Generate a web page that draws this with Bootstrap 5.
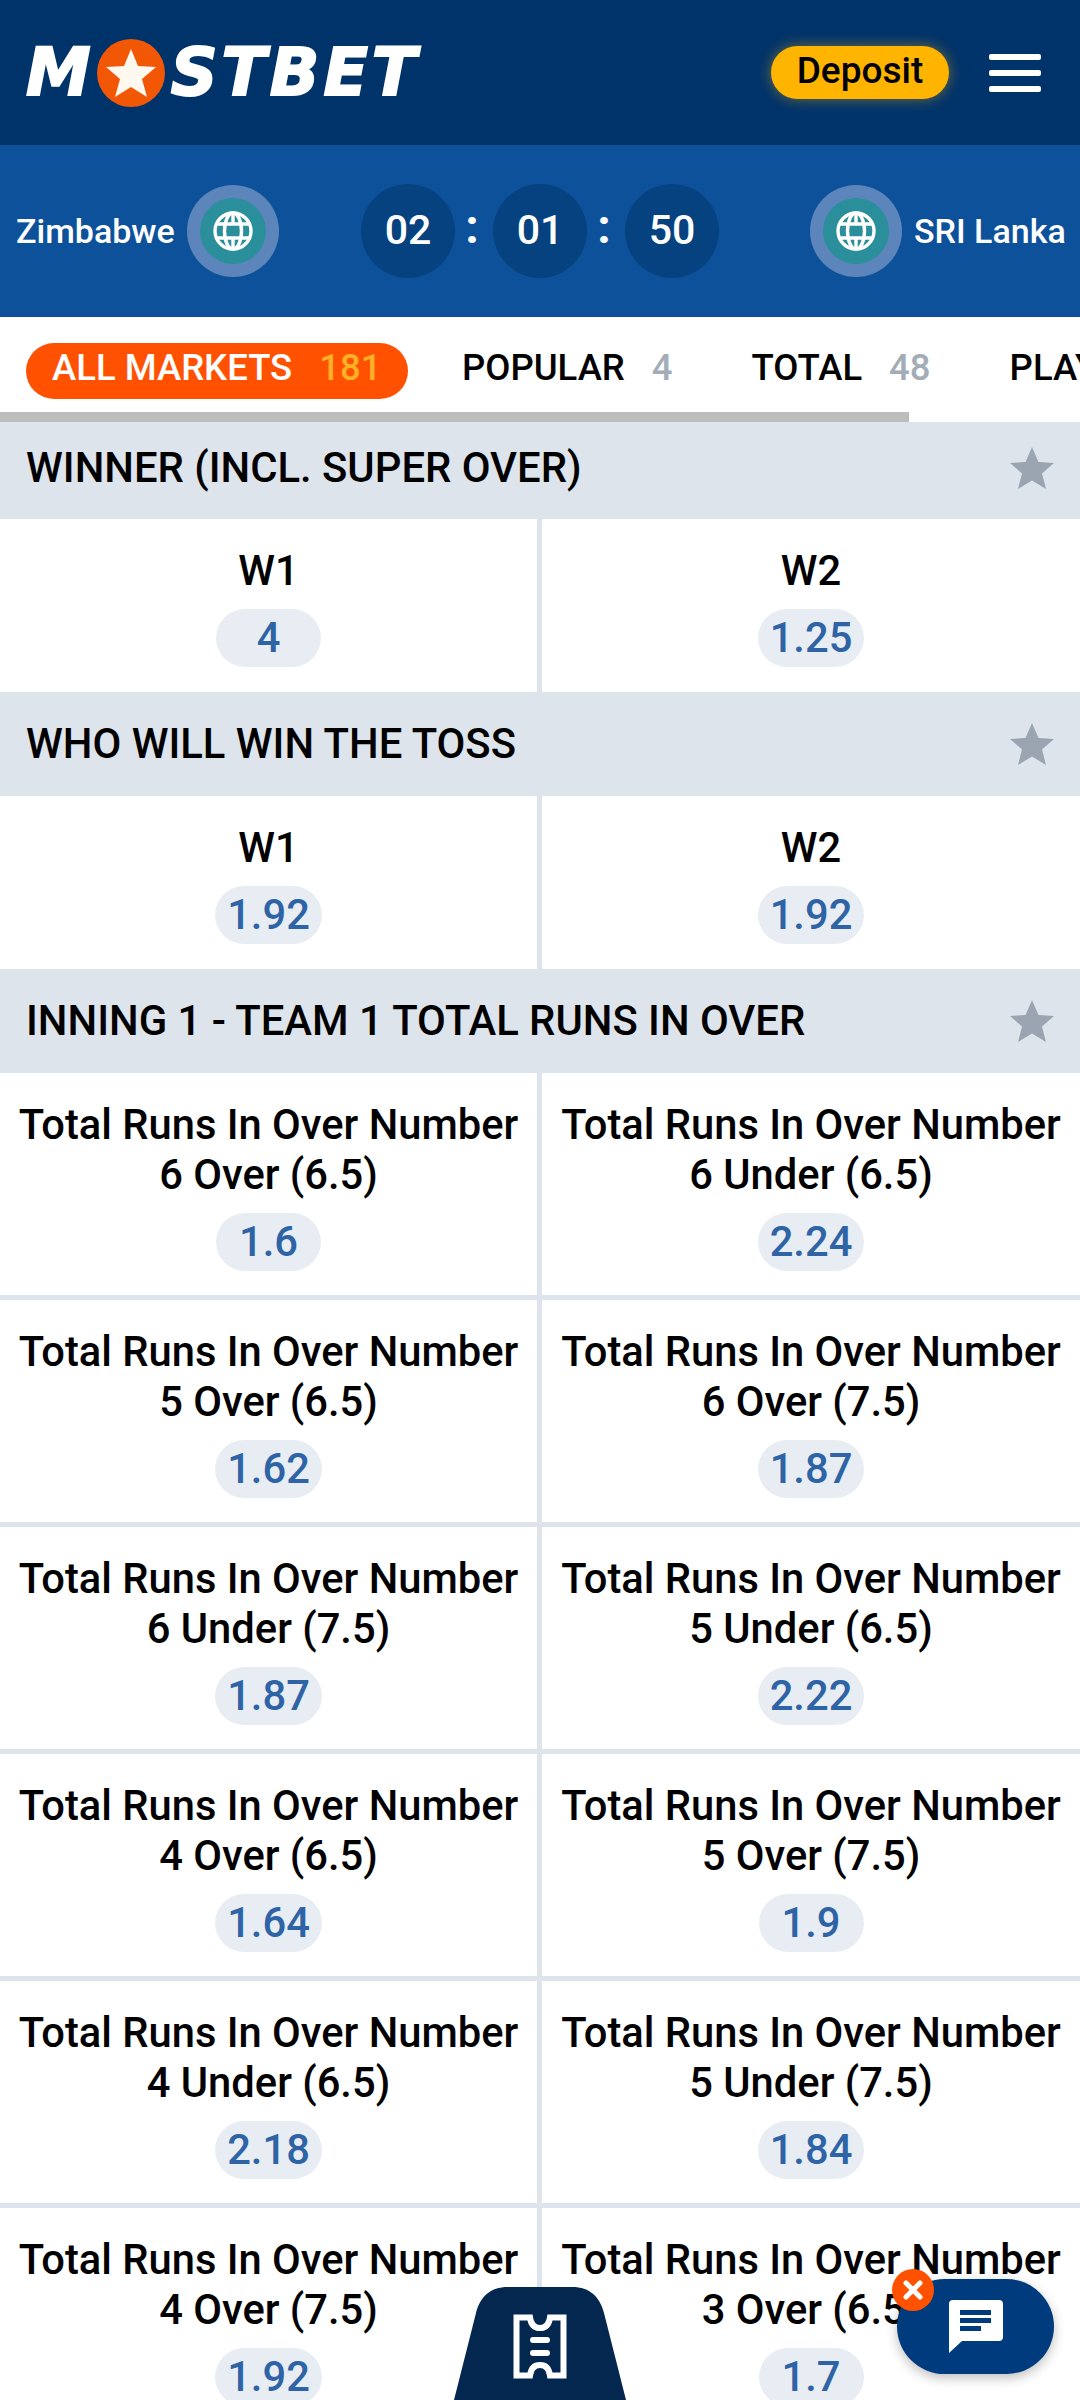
<!DOCTYPE html>
<html lang="en">
<head>
<meta charset="UTF-8">
<meta name="viewport" content="width=device-width, initial-scale=1.0">
<title>Mostbet</title>
<link href="https://cdn.jsdelivr.net/npm/bootstrap@5.3.3/dist/css/bootstrap.min.css" rel="stylesheet">
<style>
body { font-family: Roboto, "Liberation Sans", sans-serif; font-weight: 500; color: #000; width: 1080px; height: 2400px; overflow: hidden; position: relative; background: #fff; }
.top-bar { height: 145px; background: #00336a; padding: 0 39px 0 26px; }
.logo { font-family: "DejaVu Sans", sans-serif; font-weight: 700; font-style: italic; font-size: 65px; line-height: 1; color: #fff; -webkit-text-stroke: 2px #fff; }
.logo svg { margin: 0 6px; flex: none; }
.logo-rest { letter-spacing: 4px; }
.deposit-btn { width: 178px; height: 53px; line-height: 1; background: #ffb400; color: #000; font-size: 37px; font-weight: 500; border-radius: 27px; padding: 0 0 5px; box-shadow: 0 0 14px rgba(255, 180, 0, .45); border: 0; }
.burger { width: 52px; height: 38px; margin-left: 40px; }
.burger span { display: block; height: 6px; border-radius: 2px; background: #fff; }
.score-bar { height: 172px; background: #0e519b; color: #fff; padding: 0 13px 0 16px; font-size: 34px; }
.team { width: 264px; gap: 12px; }
.team-right { width: 257px; gap: 12px; }
.globe { width: 92px; height: 92px; border-radius: 50%; background: #5b85bb; flex: none; }
.globe span { width: 66px; height: 66px; border-radius: 50%; background: #2b8e9b; }
.clock { margin-left: 81px; margin-right: 91px; }
.clock-num { width: 94px; height: 94px; border-radius: 50%; background: #06427f; font-size: 41px; font-weight: 500; }
.clock-sep { width: 38px; font-size: 48px; font-weight: 700; line-height: 1; padding: 0 4px 8px 0; }
.tabs { height: 95px; padding: 26px 0 0 26px; font-size: 36.5px; overflow: hidden; white-space: nowrap; }
.tab { height: 56px; padding: 0 26px; border-radius: 28px; flex: none; line-height: 50px; }
.tab-on { background: #ff5100; color: #fff; width: 382px; margin-right: 54px; }
.tab-plain { padding: 0 0; margin-right: 79px; }
.tab-num { color: #a3adb8; margin-left: 27px; }
.tab-on .tab-num { color: #ffb125; }
.scroll-line { width: 909px; height: 10px; background: #bdbdbd; }
.mkt-head { background: #dde4eb; padding: 0 26px; font-size: 41.8px; height: 104px; }
.mkt-head-first { height: 97px; padding-bottom: 5px; }
.pick { text-align: center; font-size: 41.7px; line-height: 50px; padding: 27px 0 25px; }
.col-left { border-right: 3px solid #dde4eb; }
.col-right { border-left: 2px solid #dde4eb; }
.line-row { border-bottom: 5px solid #dde4eb; }
.line-row .pick { padding-bottom: 24px; }
.odd-pill { display: inline-block; min-width: 105px; height: 58px; line-height: 58px; margin-top: 13px; padding: 0 12px; border-radius: 29px; background: #e8edf3; color: #2e64a5; vertical-align: top; }
.slip-tab { position: absolute; left: 454px; top: 2287px; }
.chat-btn { position: absolute; left: 897px; top: 2279px; width: 157px; height: 95px; border-radius: 48px; background: #003c7d; box-shadow: 0 4px 12px rgba(0, 0, 0, .25); }
.chat-close { position: absolute; left: 892px; top: 2269px; width: 42px; height: 42px; border-radius: 50%; background: #ff5100; }
</style>
</head>
<body>
<header class="top-bar d-flex align-items-center justify-content-between">
    <div class="logo d-flex align-items-center">
        <span>M</span>
        <svg width="68" height="68" viewBox="0 0 68 68"><circle cx="34" cy="34" r="34" fill="#f25705"/><polygon points="34,10 41,27 59,28 45,40 50,58 34,48 18,58 23,40 9,28 27,27" fill="#fff8ee"/></svg>
        <span class="logo-rest">STBET</span>
    </div>
    <div class="d-flex align-items-center">
        <button class="deposit-btn" type="button">Deposit</button>
        <div class="burger d-flex flex-column justify-content-between"><span></span><span></span><span></span></div>
    </div>
</header>

<section class="score-bar d-flex align-items-center">
    <div class="team d-flex align-items-center">
        <span>Zimbabwe</span>
        <div class="globe d-flex align-items-center justify-content-center"><span class="d-flex align-items-center justify-content-center">
            <svg width="40" height="40" viewBox="0 0 40 40" fill="none" stroke="#fff" stroke-width="3.4"><circle cx="20" cy="20" r="18"/><ellipse cx="20" cy="20" rx="8.5" ry="18"/><path d="M20 2v11M20 27v11M4 13h32M4 27h32"/></svg>
        </span></div>
    </div>
    <div class="clock d-flex align-items-center">
        <div class="clock-num d-flex align-items-center justify-content-center">02</div>
        <div class="clock-sep text-center">:</div>
        <div class="clock-num d-flex align-items-center justify-content-center">01</div>
        <div class="clock-sep text-center">:</div>
        <div class="clock-num d-flex align-items-center justify-content-center">50</div>
    </div>
    <div class="team-right d-flex align-items-center">
        <div class="globe d-flex align-items-center justify-content-center"><span class="d-flex align-items-center justify-content-center">
            <svg width="40" height="40" viewBox="0 0 40 40" fill="none" stroke="#fff" stroke-width="3.4"><circle cx="20" cy="20" r="18"/><ellipse cx="20" cy="20" rx="8.5" ry="18"/><path d="M20 2v11M20 27v11M4 13h32M4 27h32"/></svg>
        </span></div>
        <span class="text-nowrap">SRI Lanka</span>
    </div>
</section>

<nav class="tabs d-flex">
    <div class="tab tab-on">ALL MARKETS<span class="tab-num">181</span></div>
    <div class="tab tab-plain">POPULAR<span class="tab-num">4</span></div>
    <div class="tab tab-plain">TOTAL<span class="tab-num">48</span></div>
    <div class="tab tab-plain">PLAY</div>
</nav>
<div class="scroll-line"></div>

<div class="mkt-head mkt-head-first d-flex align-items-center justify-content-between">
    <span>WINNER (INCL. SUPER OVER)</span>
    <svg width="44" height="42" viewBox="0 0 44 42"><polygon points="22,0 28.5,15 44,16 32,26.5 36,42 22,33.5 8,42 12,26.5 0,16 15.5,15" fill="#9aa5b1"/></svg>
</div>
<div class="row g-0">
    <div class="col-6 col-left pick">W1<br><span class="odd-pill">4</span></div>
    <div class="col-6 col-right pick">W2<br><span class="odd-pill">1.25</span></div>
</div>

<div class="mkt-head d-flex align-items-center justify-content-between">
    <span>WHO WILL WIN THE TOSS</span>
    <svg width="44" height="42" viewBox="0 0 44 42"><polygon points="22,0 28.5,15 44,16 32,26.5 36,42 22,33.5 8,42 12,26.5 0,16 15.5,15" fill="#9aa5b1"/></svg>
</div>
<div class="row g-0">
    <div class="col-6 col-left pick">W1<br><span class="odd-pill">1.92</span></div>
    <div class="col-6 col-right pick">W2<br><span class="odd-pill">1.92</span></div>
</div>

<div class="mkt-head d-flex align-items-center justify-content-between">
    <span>INNING 1 - TEAM 1 TOTAL RUNS IN OVER</span>
    <svg width="44" height="42" viewBox="0 0 44 42"><polygon points="22,0 28.5,15 44,16 32,26.5 36,42 22,33.5 8,42 12,26.5 0,16 15.5,15" fill="#9aa5b1"/></svg>
</div>
<div class="row g-0 line-row">
    <div class="col-6 col-left pick">Total Runs In Over Number<br>6 Over (6.5)<br><span class="odd-pill">1.6</span></div>
    <div class="col-6 col-right pick">Total Runs In Over Number<br>6 Under (6.5)<br><span class="odd-pill">2.24</span></div>
</div>
<div class="row g-0 line-row">
    <div class="col-6 col-left pick">Total Runs In Over Number<br>5 Over (6.5)<br><span class="odd-pill">1.62</span></div>
    <div class="col-6 col-right pick">Total Runs In Over Number<br>6 Over (7.5)<br><span class="odd-pill">1.87</span></div>
</div>
<div class="row g-0 line-row">
    <div class="col-6 col-left pick">Total Runs In Over Number<br>6 Under (7.5)<br><span class="odd-pill">1.87</span></div>
    <div class="col-6 col-right pick">Total Runs In Over Number<br>5 Under (6.5)<br><span class="odd-pill">2.22</span></div>
</div>
<div class="row g-0 line-row">
    <div class="col-6 col-left pick">Total Runs In Over Number<br>4 Over (6.5)<br><span class="odd-pill">1.64</span></div>
    <div class="col-6 col-right pick">Total Runs In Over Number<br>5 Over (7.5)<br><span class="odd-pill">1.9</span></div>
</div>
<div class="row g-0 line-row">
    <div class="col-6 col-left pick">Total Runs In Over Number<br>4 Under (6.5)<br><span class="odd-pill">2.18</span></div>
    <div class="col-6 col-right pick">Total Runs In Over Number<br>5 Under (7.5)<br><span class="odd-pill">1.84</span></div>
</div>
<div class="row g-0 line-row">
    <div class="col-6 col-left pick">Total Runs In Over Number<br>4 Over (7.5)<br><span class="odd-pill">1.92</span></div>
    <div class="col-6 col-right pick">Total Runs In Over Number<br>3 Over (6.5)<br><span class="odd-pill">1.7</span></div>
</div>

<svg class="slip-tab" width="172" height="113" viewBox="0 0 172 113">
    <path d="M0 113 L22 26 C26 10 36 0 54 0 L118 0 C136 0 146 10 150 26 L172 113 Z" fill="#03274f"/>
    <path d="M62.5 30.5 H76 C77 38 81 41 86 41 C91 41 95 38 96 30.5 H109.5 V88.5 H96 C95 81 91 78 86 78 C81 78 77 81 76 88.5 H62.5 Z" fill="none" stroke="#fff" stroke-width="6"/>
    <path d="M79 53 H93 M79 66 H93" stroke="#fff" stroke-width="6" stroke-linecap="round"/>
</svg>
<div class="chat-btn d-flex align-items-center justify-content-center">
    <svg width="54" height="54" viewBox="0 0 54 54"><path d="M4 0 H50 A4 4 0 0 1 54 4 V37 A4 4 0 0 1 50 41 H13 L0 53 V4 A4 4 0 0 1 4 0 Z" fill="#fff"/><path d="M11 10 H42 V15 H11 Z M11 18 H42 V23 H11 Z M11 26 H32 V31 H11 Z" fill="#003c7d"/></svg>
</div>
<div class="chat-close d-flex align-items-center justify-content-center">
    <svg width="22" height="22" viewBox="0 0 22 22"><path d="M4 4 L18 18 M18 4 L4 18" stroke="#fff" stroke-width="5" stroke-linecap="round"/></svg>
</div>
<script src="https://cdn.jsdelivr.net/npm/bootstrap@5.3.3/dist/js/bootstrap.bundle.min.js"></script>
</body>
</html>
